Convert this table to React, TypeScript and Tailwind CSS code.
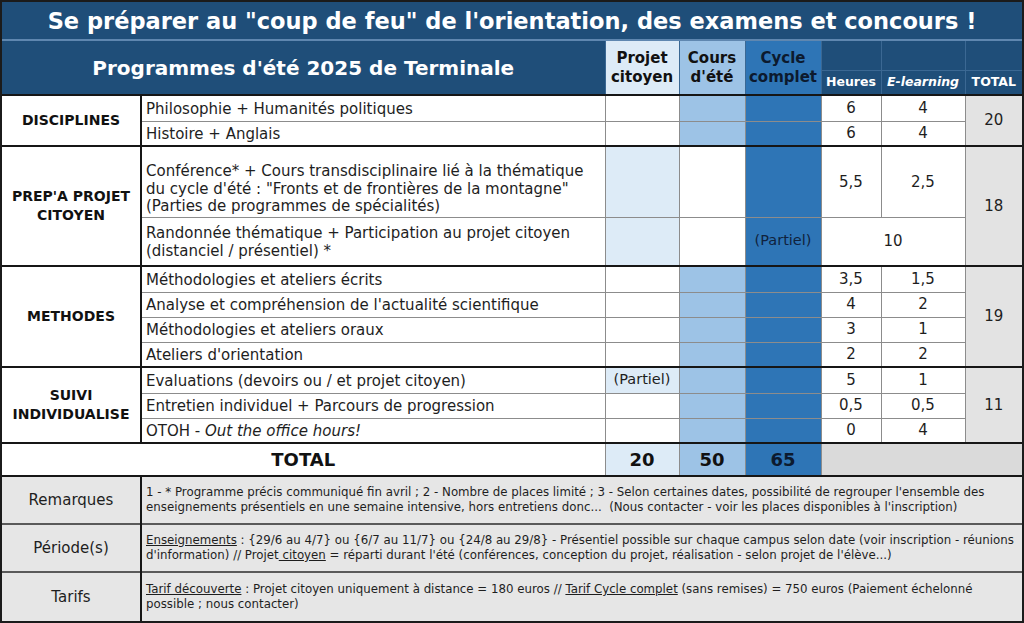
import React from "react";

const B = "border border-[#8c8c8c]";
const TOP = "border-t-2 border-t-[#161616]";

type RowProps = {
  first?: boolean;
  cat?: React.ReactNode;
  catSpan?: number;
  desc: React.ReactNode;
  descClass?: string;
  p?: string;
  c?: string;
  pText?: string;
  yText?: string;
  h?: string;
  e?: string;
  merged?: string;
  total?: string;
  totalSpan?: number;
  height: string;
};

function Row({ first, cat, catSpan, desc, descClass = "pt-[2px] leading-[19px]", p = "bg-white", c = "bg-[#9dc3e6]", pText, yText, h, e, merged, total, totalSpan, height }: RowProps) {
  const t = first ? TOP : "";
  return (
    <tr className={height}>
      {cat !== undefined && (
        <td rowSpan={catSpan} className={`${B} ${t} border-r-2 border-r-[#161616] text-center font-bold text-[14px] leading-[19px] text-[#111]`}>
          {cat}
        </td>
      )}
      <td className={`${B} ${t} px-[4px] text-left text-[15px] text-[#1e1e1e] ${descClass}`}>{desc}</td>
      <td className={`${B} ${t} ${p} text-center text-[14.5px] text-[#1e1e1e]`}>{pText}</td>
      <td className={`${B} ${t} ${c}`}></td>
      <td className={`${B} ${t} bg-[#2e75b6] text-center text-[14.5px] text-[#10223d]`}>{yText}</td>
      {merged !== undefined ? (
        <td colSpan={2} className={`${B} ${t} text-center text-[15px] text-[#1e1e1e]`}>{merged}</td>
      ) : (
        <>
          <td className={`${B} ${t} text-center text-[15px] text-[#1e1e1e]`}>{h}</td>
          <td className={`${B} ${t} text-center text-[15px] text-[#1e1e1e]`}>{e}</td>
        </>
      )}
      {total !== undefined && (
        <td rowSpan={totalSpan} className={`${B} ${t} bg-[#e3e3e3] text-center text-[15px] text-[#1e1e1e]`}>{total}</td>
      )}
    </tr>
  );
}

export default function App() {
  return (
    <div className="w-[1024px] h-[623px] overflow-hidden bg-white font-['DejaVu_Sans',sans-serif]">
      <div className="border-2 border-[#1b1b1b]">
        <table className="w-[1020px] table-fixed border-collapse border-hidden">
          <colgroup>
            <col className="w-[139px]" />
            <col className="w-[464px]" />
            <col className="w-[74px]" />
            <col className="w-[66px]" />
            <col className="w-[76px]" />
            <col className="w-[60px]" />
            <col className="w-[84px]" />
            <col className="w-[57px]" />
          </colgroup>
          <tbody>
            <tr className="h-[38px]">
              <td colSpan={8} className="p-0 bg-[#1f4e79] border-b-2 border-b-[#5f87b0] text-center text-white font-bold text-[22.5px] leading-[28px]">
                Se préparer au "coup de feu" de l'orientation, des examens et concours !
              </td>
            </tr>
            <tr className="h-[30px]">
              <td colSpan={2} rowSpan={2} className="p-0 bg-[#1f4e79] border border-[#3b6893] text-center text-white font-bold text-[20px]">
                Programmes d'été 2025 de Terminale
              </td>
              <td rowSpan={2} className="p-0 bg-[#ddebf7] border border-[#3b6893] text-center font-bold text-[15px] leading-[19px] text-[#111]">
                Projet<br />citoyen
              </td>
              <td rowSpan={2} className="p-0 bg-[#9dc3e6] border border-[#3b6893] text-center font-bold text-[15px] leading-[19px] text-[#111]">
                Cours<br />d'été
              </td>
              <td rowSpan={2} className="p-0 bg-[#2e75b6] border border-[#3b6893] text-center font-bold text-[15px] leading-[19px] text-[#0c1a2e]">
                Cycle<br />complet
              </td>
              <td className="p-0 bg-[#1f4e79] border border-[#3b6893]"></td>
              <td className="p-0 bg-[#1f4e79] border border-[#3b6893]"></td>
              <td className="p-0 bg-[#1f4e79] border border-[#3b6893]"></td>
            </tr>
            <tr className="h-[25px]">
              <td className="p-0 bg-[#1f4e79] border border-[#3b6893] text-center text-white font-bold text-[12.5px]">Heures</td>
              <td className="p-0 bg-[#1f4e79] border border-[#3b6893] text-center text-white font-bold italic text-[12.5px]">E-learning</td>
              <td className="p-0 bg-[#1f4e79] border border-[#3b6893] text-center text-white font-bold text-[12.5px]">TOTAL</td>
            </tr>

            <Row first height="h-[26px]" cat="DISCIPLINES" catSpan={2} desc="Philosophie + Humanités politiques" h="6" e="4" total="20" totalSpan={2} />
            <Row height="h-[25px]" desc="Histoire + Anglais" h="6" e="4" />

            <Row
              first
              height="h-[71px]"
              cat={<>PREP'A PROJET<br />CITOYEN</>}
              catSpan={2}
              desc={<>Conférence* + Cours transdisciplinaire lié à la thématique<br />du cycle d'été : "Fronts et de frontières de la montagne"<br />(Parties de programmes de spécialités)</>}
              descClass="align-bottom pb-[1px] leading-[17.5px]"
              p="bg-[#ddebf7]"
              c="bg-white"
              h="5,5"
              e="2,5"
              total="18"
              totalSpan={2}
            />
            <Row
              height="h-[49px]"
              desc={<>Randonnée thématique + Participation au projet citoyen<br />(distanciel / présentiel) *</>}
              descClass="pt-[2px] leading-[18px]"
              p="bg-[#ddebf7]"
              c="bg-white"
              yText="(Partiel)"
              merged="10"
            />

            <Row first height="h-[26px]" cat="METHODES" catSpan={4} desc="Méthodologies et ateliers écrits" h="3,5" e="1,5" total="19" totalSpan={4} />
            <Row height="h-[25px]" desc="Analyse et compréhension de l'actualité scientifique" h="4" e="2" />
            <Row height="h-[25px]" desc="Méthodologies et ateliers oraux" h="3" e="1" />
            <Row height="h-[25px]" desc="Ateliers d'orientation" h="2" e="2" />

            <Row first height="h-[26px]" cat={<>SUIVI<br />INDIVIDUALISE</>} catSpan={3} desc="Evaluations (devoirs ou / et projet citoyen)" p="bg-[#ddebf7]" pText="(Partiel)" h="5" e="1" total="11" totalSpan={3} />
            <Row height="h-[25px]" desc="Entretien individuel + Parcours de progression" h="0,5" e="0,5" />
            <Row height="h-[25px]" desc={<>OTOH - <i>Out the office hours!</i></>} h="0" e="4" />

            <tr className="h-[33px]">
              <td colSpan={2} className={`${B} ${TOP} border-b-2 border-b-[#161616] text-center font-bold text-[18px] text-[#111]`}>TOTAL</td>
              <td className={`${B} ${TOP} border-b-2 border-b-[#161616] bg-[#ddebf7] text-center font-bold text-[18px] text-[#111]`}>20</td>
              <td className={`${B} ${TOP} border-b-2 border-b-[#161616] bg-[#9dc3e6] text-center font-bold text-[18px] text-[#111]`}>50</td>
              <td className={`${B} ${TOP} border-b-2 border-b-[#161616] bg-[#2e75b6] text-center font-bold text-[18px] text-[#0c1a2e]`}>65</td>
              <td colSpan={3} className={`${B} ${TOP} border-b-2 border-b-[#161616] bg-[#dadada]`}></td>
            </tr>

            <tr className="h-[48px]">
              <td className="border border-[#5a5a5a] border-r-2 border-r-[#161616] bg-[#e6e6e6] text-center text-[15px] text-[#1e1e1e]">Remarques</td>
              <td colSpan={7} className="border border-[#5a5a5a] bg-[#e6e6e6] px-[4px] text-left text-[11.8px] leading-[15px] text-[#1e1e1e] whitespace-nowrap">
                1 - * Programme précis communiqué fin avril ; 2 - Nombre de places limité ; 3 - Selon certaines dates, possibilité de regrouper l'ensemble des<br />
                enseignements présentiels en une semaine intensive, hors entretiens donc...&nbsp; (Nous contacter - voir les places disponibles à l'inscription)
              </td>
            </tr>
            <tr className="h-[48px]">
              <td className="border border-[#5a5a5a] border-t-2 border-r-2 border-r-[#161616] bg-[#e6e6e6] text-center text-[15px] text-[#1e1e1e]">Période(s)</td>
              <td colSpan={7} className="border border-[#5a5a5a] border-t-2 bg-[#e6e6e6] px-[4px] text-left text-[11.8px] leading-[15px] text-[#1e1e1e] whitespace-nowrap">
                <span className="underline">Enseignements</span> : {"{29/6 au 4/7}"} ou {"{6/7 au 11/7}"} ou {"{24/8 au 29/8}"} - Présentiel possible sur chaque campus selon date (voir inscription - réunions<br />
                d'information) // Projet<span className="underline"> citoyen</span> = réparti durant l'été (conférences, conception du projet, réalisation - selon projet de l'élève...)
              </td>
            </tr>
            <tr className="h-[49px]">
              <td className="border border-[#5a5a5a] border-t-2 border-r-2 border-r-[#161616] bg-[#e6e6e6] text-center text-[15px] text-[#1e1e1e]">Tarifs</td>
              <td colSpan={7} className="border border-[#5a5a5a] border-t-2 bg-[#e6e6e6] px-[4px] text-left text-[11.8px] leading-[15px] text-[#1e1e1e] whitespace-nowrap">
                <span className="underline">Tarif découverte</span> : Projet citoyen uniquement à distance = 180 euros // <span className="underline">Tarif Cycle complet</span> (sans remises) = 750 euros (Paiement échelonné<br />
                possible ; nous contacter)
              </td>
            </tr>
          </tbody>
        </table>
      </div>
    </div>
  );
}
